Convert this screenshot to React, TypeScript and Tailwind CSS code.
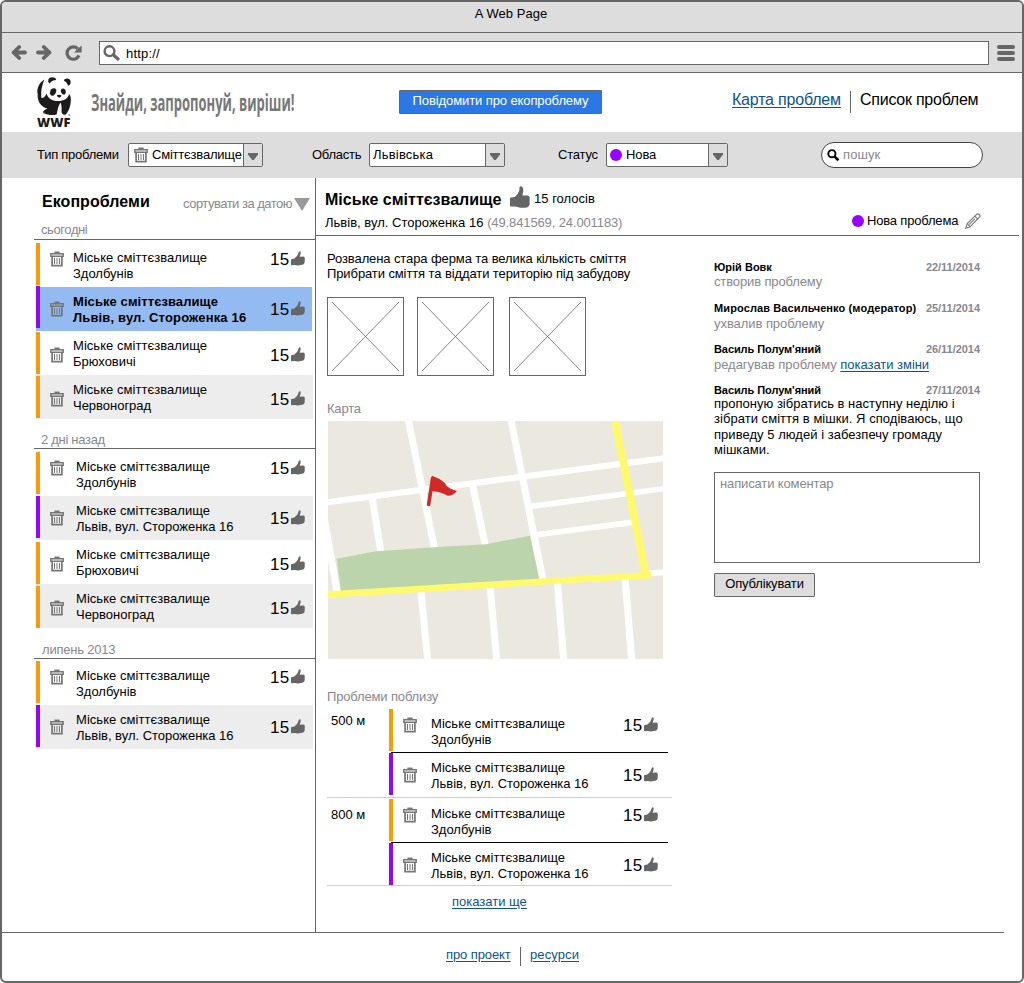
import type { ReactNode } from "react";

type Tone = "orange" | "violet";

interface Issue {
  place: string;
  tone: Tone;
  barShift: string;
  iconShift: string;
  bg?: string;
  bold?: boolean;
}

function Thumb({ className = "" }: { className?: string }) {
  return (
    <svg viewBox="0 0 20 22" preserveAspectRatio="none" className={"shrink-0 " + className} fill="#666">
      <path d="M0 12.2Q0 11.4 1 11.4L4.6 11Q8.4 7.6 9.4 4.4V1.6Q10.2 0 11.8.4Q13.8 1.6 13.3 5L12.4 9.4H17.6Q19.6 9.8 19.6 11.4V18.6Q19.4 20.8 17 21.6Q14.6 22 10.4 21.8Q7.4 20.8 5 20.6H.9Q0 20.6 0 19.8Z" />
    </svg>
  );
}

function ThumbSmall() {
  return (
    <svg viewBox="0 0 14 15" className="h-[15px] w-[14px] shrink-0" fill="#666">
      <path d="M0 8.9Q0 8 .9 8L3.4 7.6Q6.2 5.600 7 3.300L7.600 1.200Q8.300 0 9.200.3Q10 1 9.500 3L8.600 5.800L12.300 5.600Q13.800 5.800 13.800 7.200L13.600 11.800Q13.200 13.200 11.400 13.800L6.800 14.600L3.800 14.100L.8 14.200Q0 14.200 0 13.400Z" />
    </svg>
  );
}

function Trash() {
  return (
    <svg viewBox="0 0 14 16" className="h-4 w-[14px] shrink-0" fill="none" stroke="#757575">
      <path d="M4.400 1.300h5.200" strokeWidth="1.500" />
      <path d="M.8 2.700h12.400v2.600H.8z" strokeWidth="1.400" />
      <path d="M2.100 5.500V14.700h9.800V5.500" strokeWidth="1.700" />
      <path d="M4.500 7v6M7 7v6M9.500 7v6" strokeWidth="1" />
    </svg>
  );
}

function Panda() {
  return (
    <svg viewBox="0 0 34 39" className="h-[39px] w-[34px]" fill="#1c1a1b">
      <path d="M7.500 2.600C2.500 5.500 0 10.500.4 15.500C.8 19 2.200 21.500 4.500 22.400C4 17.500 4 12.500 5.400 8.500C6 6 6.800 4.200 7.500 2.600Z" />
      <path d="M11.200 4.200C11 1.600 12.700.2 15.200.2C17.500.2 19.200 1.500 19.200 3.100C16.200 3.200 14 4.400 12.800 6.400C11.800 6 11.300 5.200 11.200 4.200Z" />
      <path d="M26.800 3.600C27.400 1.900 29.400 1.100 31.400 1.700C33.400 2.500 34 4.300 33.500 6.200C33.100 7.600 32.100 8.500 31 8.700C30.400 6.400 28.800 4.600 26.800 3.600Z" />
      <path d="M14.200 12.200C16 10.500 18.800 11 19.300 12.800C19.700 14.800 18.500 17.200 16.600 18.400C14.600 19.200 13 18 13 16.200C13 14.600 13.400 13.200 14.200 12.200Z" />
      <path d="M24.200 12.400C25 11 27 11.200 28 12.600C29 14.200 29 16.200 28 17.200C26.600 18 25 17 24.200 15.400C23.700 14.300 23.700 13.300 24.200 12.400Z" />
      <path d="M19.800 18.300C21.200 17.500 23.200 17.500 24.400 18.400C24.200 19.800 23 20.500 22 20.500C21 20.400 20 19.500 19.800 18.300Z" />
      <path d="M.6 17.500C3 22.400 7 22.400 9.600 16.400C10.400 20 13 22.400 16.500 23.400C20.500 24.400 25.500 24 28.400 22.200C30.400 21 31.600 18.800 32.300 17C34.400 20 34.200 25 32.900 29.500C32.200 32.500 30.700 35.500 28.800 37.400C26.500 38.200 25 37 24.500 35C24.900 31 24.600 28 23.400 25.600C21.200 29 20.800 33 19.600 37.400C15 38.800 8 37.800 5.800 35.600C6 34 8.500 32.400 10.500 31.600C5 30.400.4 25.500.6 17.500Z" />
      <path d="M6.500 35.400l1.600 1M31.500 37.600l1.800.6" stroke="#777" strokeWidth="1.200" />
    </svg>
  );
}

function Row({ issue, textClass }: { issue: Issue; textClass: string }) {
  return (
    <div className={"flex h-[44px] items-start " + (issue.bg ?? "")}>
      <div className={"h-[42px] w-1 shrink-0 " + issue.barShift + (issue.tone === "orange" ? " bg-[#ff9900]" : " bg-[#9900ff]")} />
      <div className={"ml-[10px] " + issue.iconShift}>
        <Trash />
      </div>
      <div className={"shrink-0 pt-[7px] text-[13px] leading-4 whitespace-nowrap " + textClass + (issue.bold ? " font-bold" : "")}>
        <div className={issue.bold ? "tracking-[0.08px]" : "tracking-[0.05px]"}>Міське сміттєзвалище</div>
        <div className={issue.bold ? "tracking-[0.16px]" : "-tracking-[0.02px]"}>{issue.place}</div>
      </div>
      <div className={"flex items-start " + issue.iconShift}>
        <span className="w-[21px] pt-px text-[17px] leading-4 tracking-[0.2px]">15</span>
        <ThumbSmall />
      </div>
    </div>
  );
}

const today: Issue[] = [
  { place: "Здолбунів", tone: "orange", barShift: "", iconShift: "mt-2" },
  { place: "Львів, вул. Стороженка 16", tone: "violet", barShift: "-mt-px", iconShift: "mt-[14px]", bg: "w-[276px] bg-[#93bbf2]", bold: true },
  { place: "Брюховичі", tone: "orange", barShift: "mt-px", iconShift: "mt-4" },
  { place: "Червоноград", tone: "orange", barShift: "mt-px", iconShift: "mt-4", bg: "bg-[#ededed]" },
];

const twoDays: Issue[] = [
  { place: "Здолбунів", tone: "orange", barShift: "", iconShift: "mt-2" },
  { place: "Львів, вул. Стороженка 16", tone: "violet", barShift: "", iconShift: "mt-[14px]", bg: "bg-[#ededed]" },
  { place: "Брюховичі", tone: "orange", barShift: "mt-[2px]", iconShift: "mt-4" },
  { place: "Червоноград", tone: "orange", barShift: "mt-[2px]", iconShift: "mt-4", bg: "bg-[#ededed]" },
];

const july = twoDays.slice(0, 2);
const nearby: Issue[] = [
  { place: "Здолбунів", tone: "orange", barShift: "", iconShift: "mt-2" },
  { place: "Львів, вул. Стороженка 16", tone: "violet", barShift: "", iconShift: "mt-[14px]" },
];

function Group({ title, titleClass, rows, textClass, rowsClass }: { title: string; titleClass: string; rows: Issue[]; textClass: string; rowsClass: string }) {
  return (
    <section>
      <div className="ml-8 border-b border-[#666]">
        <h3 className={"text-[13px] leading-4 text-[#888890] " + titleClass}>{title}</h3>
      </div>
      <div className={"ml-[34px] w-[277px] " + rowsClass}>
        {rows.map((r, i) => (
          <Row key={i} issue={r} textClass={textClass} />
        ))}
      </div>
    </section>
  );
}

function Select({ className, children }: { className: string; children: ReactNode }) {
  return (
    <div className={"flex h-6 shrink-0 items-stretch overflow-hidden rounded-[2px] border border-[#666] bg-white " + className}>
      <div className="flex min-w-0 flex-1 items-start whitespace-nowrap">{children}</div>
      <div className="flex w-[19px] shrink-0 items-center justify-center border-l border-[#666] bg-[#ddd]">
        <svg viewBox="0 0 10 7" className="mt-[2px] h-[7px] w-[10px]" fill="#666">
          <path d="M0 0h10v1.500L5.800 7H4.200L0 1.500z" />
        </svg>
      </div>
    </div>
  );
}

function Placeholder() {
  return (
    <svg viewBox="0 0 77 79" className="h-[79px] w-[77px]" fill="none" stroke="#666">
      <rect x=".5" y=".5" width="76" height="78" />
      <path d="M5 5l67 69M72 5L5 74" strokeWidth=".8" />
    </svg>
  );
}

function CityMap() {
  return (
    <svg viewBox="36 63 1005 714" className="h-[238px] w-[335px]" fill="none">
      <rect x="36" y="63" width="1005" height="714" fill="#ebe8e0" />
      <g stroke="#fff" strokeWidth="21">
        <path d="M30 307L1050 174" strokeWidth="19" />
        <path d="M640 320L1050 265M655 405L948 367M1000 520L1045 517" strokeWidth="17" />
        <path d="M277 60L356 448M585 60L681 540M168 290L195 458M470 255L508 438M24 350L63 575" />
        <path d="M314 565L335 780M522 555L542 780M724 545L743 780M927 530L947 780" />
      </g>
      <path d="M62 476L180 454L365 441L510 433L642 407L670 538L75 573Z" fill="#bcd4ac" />
      <path d="M30 584L1005 525" stroke="#fffa6c" strokeWidth="19" />
      <path d="M897 60L992 534" stroke="#fffa6c" strokeWidth="23" />
      <path d="M350 234L338 313" stroke="#cf2a27" strokeWidth="11" strokeLinecap="round" />
      <path d="M348 228Q374 236 386 249Q396 267 423 273Q410 288 395 287Q370 274 346 273Z" fill="#cf2a27" />
    </svg>
  );
}

function Comment({ name, nameClass, date, children, className }: { name: string; nameClass?: string; date: string; children: ReactNode; className: string }) {
  return (
    <article className={className}>
      <div className="flex justify-between text-[11px] leading-[14px] font-bold whitespace-nowrap">
        <span className={nameClass}>{name}</span>
        <span className="-tracking-[0.04px] text-[#888890]">{date}</span>
      </div>
      {children}
    </article>
  );
}

const link = "text-[#0b5394] underline underline-offset-2";

export default function App() {
  return (
    <div className="flex h-[983px] w-[1024px] flex-col overflow-hidden rounded-[6px] border-2 border-[#666] bg-white font-['Liberation_Sans',Arial,sans-serif] text-[13px] text-black">
      <div className="flex h-[31px] shrink-0 justify-center border-b border-[#666] bg-[#ddd] pr-[2px] pt-1 leading-4">
        <span className="tracking-[0.05px]">A Web Page</span>
      </div>
      <div className="flex h-10 shrink-0 items-center border-b border-[#666] bg-[#ddd]">
        <svg viewBox="0 0 16 15" className="ml-[9px] h-[15px] w-4" fill="none" stroke="#666" strokeWidth="3.800" strokeLinecap="round" strokeLinejoin="round">
          <path d="M8.200 2L2.500 7.500L8.200 13M3 7.500H14" />
        </svg>
        <svg viewBox="0 0 16 15" className="ml-[9px] h-[15px] w-4" fill="none" stroke="#666" strokeWidth="3.800" strokeLinecap="round" strokeLinejoin="round">
          <path d="M7.800 2L13.500 7.500L7.800 13M13 7.500H2" />
        </svg>
        <svg viewBox="0 0 17 16" className="ml-[13px] h-4 w-[17px]" fill="none" stroke="#666" strokeWidth="3.200">
          <path d="M12.800 3.800A6.200 6.200 0 1 0 14 10.400" />
          <path d="M16.600.6V7.600H9Z" fill="#666" stroke="none" />
        </svg>
        <div className="ml-[17px] flex h-6 w-[890px] items-center border border-[#666] bg-white">
          <svg viewBox="0 0 17 16" className="ml-[3px] h-4 w-[17px]" fill="none" stroke="#666">
            <circle cx="6.500" cy="6.200" r="4.900" strokeWidth="2.400" />
            <path d="M10.300 9.800L15 14" strokeWidth="3.200" strokeLinecap="round" />
          </svg>
          <span className="ml-[6px] pt-[2px] leading-4 tracking-[0.2px]">http://</span>
        </div>
        <div className="ml-2 flex w-[18px] flex-col gap-[2px]">
          <i className="h-1 rounded-[2px] bg-[#666]" />
          <i className="h-1 rounded-[2px] bg-[#666]" />
          <i className="h-1 rounded-[2px] bg-[#666]" />
        </div>
      </div>

      <header className="flex h-[59px] shrink-0 items-start">
        <div className="ml-[35px] mt-1 flex w-[34px] flex-col">
          <Panda />
          <span className="origin-left scale-x-[1.06] font-['Open_Sans',sans-serif] text-[12px] leading-[13px] font-extrabold text-[#1c1a1b]">WWF</span>
        </div>
        <div className="ml-5 w-[308px] pt-[14px]">
          <span className="inline-block origin-left scale-x-[0.565] font-['Open_Sans',sans-serif] text-[23px] leading-[30px] font-bold whitespace-nowrap text-[#777]">
            Знайди, запропонуй, виріши!
          </span>
        </div>
        <button className="mt-[17px] flex h-6 w-[203px] justify-center rounded-[1px] border border-[#666] bg-[#2b78e4] pt-[2px] leading-4 -tracking-[0.1px] whitespace-nowrap text-white">
          Повідомити про екопроблему
        </button>
        <nav className="ml-[130px] flex pt-[17px] text-[16px] leading-5 whitespace-nowrap">
          <a className={"w-[109px] -tracking-[0.2px] " + link}>Карта проблем</a>
          <span className="ml-[9px] mt-px h-[22px] w-px bg-[#666]" />
          <span className="ml-[9px] -tracking-[0.25px]">Список проблем</span>
        </nav>
      </header>

      <div className="flex h-[46px] shrink-0 items-center bg-[#ddd] leading-4">
        <span className="ml-[35px] w-[91px] -tracking-[0.24px] whitespace-nowrap">Тип проблеми</span>
        <Select className="w-[135px]">
          <div className="ml-[5px] mt-[3px]">
            <Trash />
          </div>
          <span className="ml-1 mt-[3px] -tracking-[0.2px]">Сміттєзвалище</span>
        </Select>
        <span className="ml-[49px] w-[57px] -tracking-[0.25px]">Область</span>
        <Select className="w-[136px]">
          <span className="ml-[3px] mt-[3px] tracking-[0.2px]">Львівська</span>
        </Select>
        <span className="ml-[53px] w-12 -tracking-[0.2px]">Статус</span>
        <Select className="w-[122px]">
          <span className="ml-[3px] mt-[5px] h-3 w-3 rounded-full bg-[#9900ff]" />
          <span className="ml-1 mt-[3px] -tracking-[0.1px]">Нова</span>
        </Select>
        <div className="ml-[93px] flex h-[26px] w-[162px] items-center rounded-full border border-[#444] bg-white">
          <svg viewBox="0 0 13 13" className="ml-[5px] h-[13px] w-[13px]" fill="none" stroke="#000">
            <circle cx="4.900" cy="4.700" r="3.600" strokeWidth="1.900" />
            <path d="M7.700 7.600L11.400 11.200" strokeWidth="2.600" />
          </svg>
          <span className="ml-[3px] tracking-[0.1px] text-[#888890]">пошук</span>
        </div>
      </div>

      <main className="flex h-[754px] shrink-0">
        <aside className="flex w-[314px] shrink-0 flex-col border-r border-[#666]">
          <div className="flex h-[44px] items-start whitespace-nowrap">
            <h1 className="ml-10 w-[141px] pt-[14px] text-[16px] leading-5 font-bold tracking-[0.05px]">Екопроблеми</h1>
            <span className="w-[111px] pt-[18px] leading-4 -tracking-[0.5px] text-[#888890]">сортувати за датою</span>
            <svg viewBox="0 0 16 13" className="mt-5 h-[13px] w-4" fill="#999">
              <path d="M0 0h16L8 13z" />
            </svg>
          </div>
          <Group title="сьогодні" titleClass="pl-[7px] h-[17px] -tracking-[0.4px]" rows={today} textClass="ml-[9px] w-[197px]" rowsClass="pt-[3px]" />
          <div className="h-[13px]" />
          <Group title="2 дні назад" titleClass="pl-[7px] h-4 -tracking-[0.3px]" rows={twoDays} textClass="ml-3 w-[194px]" rowsClass="pt-[3px]" />
          <div className="h-[14px]" />
          <Group title="липень 2013" titleClass="pl-2 h-4 -tracking-[0.2px]" rows={july} textClass="ml-3 w-[194px]" rowsClass="pt-[2px]" />
        </aside>

        <div className="flex w-[703px] flex-col">
          <div className="flex h-[58px] shrink-0 justify-between border-b border-[#666] whitespace-nowrap">
            <div className="pl-[9px]">
              <div className="flex h-[35px] items-start">
                <h2 className="w-[185px] pt-3 text-[16px] leading-5 font-bold">Міське сміттєзвалище</h2>
                <Thumb className="mt-2 h-[22px] w-5" />
                <span className="ml-1 pt-[13px] leading-4 tracking-[0.02px]">15 голосів</span>
              </div>
              <div className="pt-[2px] leading-4">
                <span className="tracking-[0.02px]">Львів, вул. Стороженка 16</span>{" "}
                <span className="-tracking-[0.12px] text-[#888890]">(49.841569, 24.001183)</span>
              </div>
            </div>
            <div className="flex items-center pt-[28px] pr-[38px] leading-4">
              <span className="h-3 w-3 rounded-full bg-[#9900ff]" />
              <span className="ml-[3px] w-[98px] -tracking-[0.18px]">Нова проблема</span>
              <svg viewBox="0 0 16 16" className="h-4 w-4" fill="none" stroke="#777" strokeWidth="1.100">
                <path d="M.8 15.200L2.200 10.600L11.800 1.200Q13 .3 14.200 1.500Q15.600 2.900 14.700 4L5.200 13.700Z" />
                <path d="M2.200 10.600L5.200 13.700M9.800 3.200L12.800 6.200M4.300 11.300L10 5.600" />
              </svg>
            </div>
          </div>

          <div className="flex pl-[11px]">
            <div className="flex w-[387px] flex-col">
              <p className="pt-[15px] leading-[15px] -tracking-[0.1px] whitespace-nowrap">
                Розвалена стара ферма та велика кількість сміття
                <br />
                Прибрати сміття та віддати територію під забудову
              </p>
              <div className="mt-4 flex">
                <Placeholder />
                <div className="ml-[13px]">
                  <Placeholder />
                </div>
                <div className="ml-[15px]">
                  <Placeholder />
                </div>
              </div>
              <h3 className="mt-[25px] leading-4 -tracking-[0.2px] text-[#888890]">Карта</h3>
              <div className="mt-1 ml-px">
                <CityMap />
              </div>
              <h3 className="mt-[30px] leading-4 -tracking-[0.15px] text-[#888890]">Проблеми поблизу</h3>
              {["500 м", "800 м"].map((distance, i) => (
                <div key={distance} className={"flex w-[345px] border-b border-[#ccc] " + (i === 0 ? "h-[93px] pt-1" : "h-[88px] pt-px")}>
                  <div className={"w-[62px] pl-1 leading-4 " + (i === 0 ? "pt-1" : "pt-2")}>{distance}</div>
                  <div className="w-[279px]">
                    <div className="flow-root h-[44px]">
                      <div className="h-[43px]">
                        <Row issue={nearby[0]} textClass="ml-[14px] w-[192px]" />
                      </div>
                      <div className="ml-[2px] h-px bg-black" />
                    </div>
                    <div className="h-[42px]">
                      <Row issue={nearby[1]} textClass="ml-[14px] w-[192px]" />
                    </div>
                  </div>
                </div>
              ))}
              <a className={"ml-[125px] mt-2 leading-4 " + link}>показати ще</a>
            </div>

            <div className="w-[266px] pt-6">
              <Comment name="Юрій Вовк" date="22/11/2014" className="h-[41px]">
                <p className="leading-4 -tracking-[0.13px] text-[#888890]">створив проблему</p>
              </Comment>
              <Comment name="Мирослав Васильченко (модератор)" nameClass="tracking-[0.11px]" date="25/11/2014" className="h-[41px]">
                <p className="pt-px leading-4 -tracking-[0.06px] text-[#888890]">ухвалив проблему</p>
              </Comment>
              <Comment name="Василь Полум'яний" nameClass="-tracking-[0.08px]" date="26/11/2014" className="h-[41px]">
                <p className="pt-px leading-4 -tracking-[0.04px] whitespace-nowrap text-[#888890]">
                  редагував проблему <a className={link}>показати зміни</a>
                </p>
              </Comment>
              <Comment name="Василь Полум'яний" nameClass="-tracking-[0.08px]" date="27/11/2014" className="h-[89px]">
                <p className="-mt-px leading-[15.300px] tracking-[0.04px] whitespace-nowrap">
                  <span className="tracking-[0.01px]">пропоную зібратись в наступну неділю і</span>
                  <br />
                  зібрати сміття в мішки. Я сподіваюсь, що
                  <br />
                  приведу 5 людей і забезпечу громаду
                  <br />
                  мішками.
                </p>
              </Comment>
              <div className="h-[91px] w-[266px] border border-[#666] pl-[5px] pt-[3px] leading-4 -tracking-[0.13px] text-[#888890]">написати коментар</div>
              <button className="mt-[10px] flex h-6 w-[101px] justify-center rounded-[1px] border border-[#666] bg-[#ddd] pt-[2px] leading-4 -tracking-[0.15px]">Опублікувати</button>
            </div>
          </div>
        </div>
      </main>

      <footer className="flex flex-1 flex-col">
        <div className="h-px w-[1002px] bg-[#666]" />
        <div className="flex pt-[14px] pl-[444px] leading-4">
          <a className={"w-[65px] -tracking-[0.1px] whitespace-nowrap " + link}>про проект</a>
          <span className="ml-[9px] h-[19px] w-px bg-[#666]" />
          <a className={"ml-[9px] tracking-[0.1px] " + link}>ресурси</a>
        </div>
      </footer>
    </div>
  );
}
